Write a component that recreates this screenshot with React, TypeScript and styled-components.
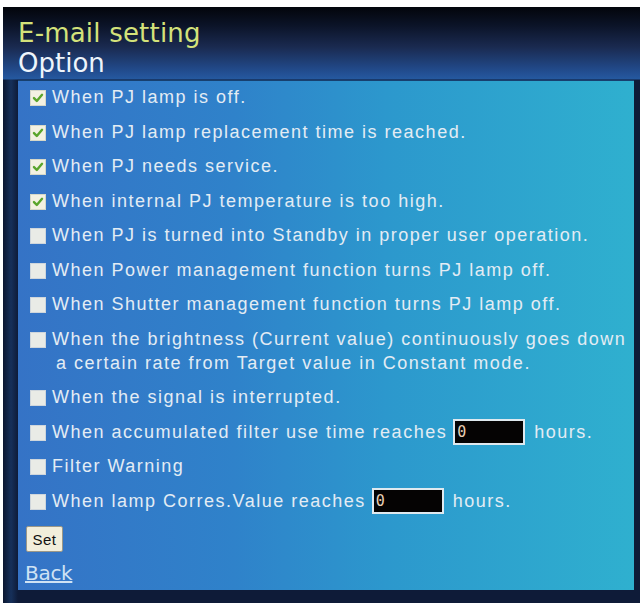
import React from "react";
import styled, { createGlobalStyle } from "styled-components";

const Global = createGlobalStyle`
  html, body { margin: 0; padding: 0; background: #ffffff; }
  body { font-family: "Liberation Sans", Arial, sans-serif; }
`;

const Frame = styled.div`
  margin: 7px 0 0 3px;
  width: 637px;
  height: 596px;
  box-sizing: border-box;
  padding: 0 6px 13px 15px;
  display: flex;
  flex-direction: column;
  overflow: hidden;
  background:
    linear-gradient(to bottom, #03050b 0px, #0b1327 18px, #1a2a50 40px, #224c8e 64px, #2559a0 72px, transparent 73px),
    linear-gradient(to right, #0b1630 0px, #16305a 8px, #0e1b38 15px);
  background-color: #0a1224;
`;

const Header = styled.div`
  flex: none;
  height: 73px;
  display: flex;
  flex-direction: column;
  justify-content: flex-end;
  padding-bottom: 2px;
  box-sizing: border-box;
`;

const Title = styled.div`
  font-family: "DejaVu Sans", sans-serif;
  font-size: 26px;
  line-height: 30px;
  color: #d4e27a;
  letter-spacing: 0.2px;
`;

const Subtitle = styled.div`
  font-family: "DejaVu Sans", sans-serif;
  font-size: 26px;
  line-height: 30px;
  color: #eef5fb;
`;

const Panel = styled.div`
  flex: 1;
  min-height: 0;
  border-top: 1px solid #17406f;
  background: linear-gradient(to right, #3573c6 0%, #2f82ca 35%, #2c98cd 60%, #2fb0cf 100%);
  padding: 0 0 0 12px;
  display: flex;
  flex-direction: column;
`;

const Row = styled.div`
  flex: none;
  display: flex;
  align-items: flex-start;
  padding: 5px 0 6.5px;
  font-family: "Liberation Sans", Arial, sans-serif;
  font-size: 18px;
  line-height: 23px;
  color: #e3ecf4;
  letter-spacing: 1.5px;
`;

const Box = styled.span<{ $checked: boolean }>`
  flex: none;
  width: 14px;
  height: 14px;
  margin: 4px 6px 0 0;
  background: ${(p) => (p.$checked ? "#f3f1e2" : "#e9ebe6")};
  border: 1px solid ${(p) => (p.$checked ? "#d6d8c8" : "#cfd6dc")};
  display: flex;
  align-items: center;
  justify-content: center;
`;

const Label = styled.span`
  display: flex;
  flex-direction: column;
  gap: 1px;
`;

const Indent = styled.span`
  padding-left: 4px;
`;

const Inline = styled.span`
  display: flex;
  align-items: center;
  height: 23px;
`;

const HoursInput = styled.span<{ $ml: number }>`
  display: inline-flex;
  align-items: center;
  flex: none;
  width: 66px;
  height: 22px;
  margin: 0 9px 0 ${(p) => p.$ml}px;
  background: #050303;
  border: 2px solid #dfe9ef;
  color: #e8cfb4;
  font-family: "DejaVu Sans Mono", monospace;
  font-size: 15px;
  letter-spacing: 0;
  padding-left: 2px;
  box-sizing: content-box;
`;

const SetButton = styled.button`
  flex: none;
  margin: 7px 0 0 -4px;
  width: 37px;
  height: 26px;
  padding: 0;
  background: #f2eedb;
  border: 1px solid #9a9788;
  border-radius: 2px;
  font-family: "Liberation Sans", Arial, sans-serif;
  font-size: 15px;
  letter-spacing: 0.5px;
  color: #111;
  align-self: flex-start;
`;

const BackLink = styled.a`
  flex: none;
  margin: 8px 0 0 -5px;
  align-self: flex-start;
  font-family: "DejaVu Sans", sans-serif;
  font-size: 20px;
  line-height: 26px;
  color: #cfe2f4;
  text-decoration: underline;
  letter-spacing: -0.3px;
`;

const Check = () => (
  <svg width="12" height="12" viewBox="0 0 11 11">
    <path d="M1.8 5.6 L4.4 8.2 L9.2 2.6" fill="none" stroke="#5aa52c" strokeWidth="2.2" strokeLinecap="round" strokeLinejoin="round" />
  </svg>
);

const items: { text: string; checked: boolean }[] = [
  { text: "When PJ lamp is off.", checked: true },
  { text: "When PJ lamp replacement time is reached.", checked: true },
  { text: "When PJ needs service.", checked: true },
  { text: "When internal PJ temperature is too high.", checked: true },
  { text: "When PJ is turned into Standby in proper user operation.", checked: false },
  { text: "When Power management function turns PJ lamp off.", checked: false },
  { text: "When Shutter management function turns PJ lamp off.", checked: false },
];

export default function App() {
  return (
    <>
      <Global />
      <Frame>
        <Header>
          <Title>E-mail setting</Title>
          <Subtitle>Option</Subtitle>
        </Header>
        <Panel>
          {items.map((it) => (
            <Row key={it.text}>
              <Box $checked={it.checked}>{it.checked && <Check />}</Box>
              <Label>{it.text}</Label>
            </Row>
          ))}
          <Row>
            <Box $checked={false} />
            <Label>
              <span>When the brightness (Current value) continuously goes down</span>
              <Indent>a certain rate from Target value in Constant mode.</Indent>
            </Label>
          </Row>
          <Row>
            <Box $checked={false} />
            <Label>When the signal is interrupted.</Label>
          </Row>
          <Row>
            <Box $checked={false} />
            <Inline>
              When accumulated filter use time reaches
              <HoursInput $ml={6}>0</HoursInput>
              hours.
            </Inline>
          </Row>
          <Row>
            <Box $checked={false} />
            <Label>Filter Warning</Label>
          </Row>
          <Row>
            <Box $checked={false} />
            <Inline>
              When lamp Corres.Value reaches
              <HoursInput $ml={6}>0</HoursInput>
              hours.
            </Inline>
          </Row>
          <SetButton type="button">Set</SetButton>
          <BackLink href="#">Back</BackLink>
        </Panel>
      </Frame>
    </>
  );
}
